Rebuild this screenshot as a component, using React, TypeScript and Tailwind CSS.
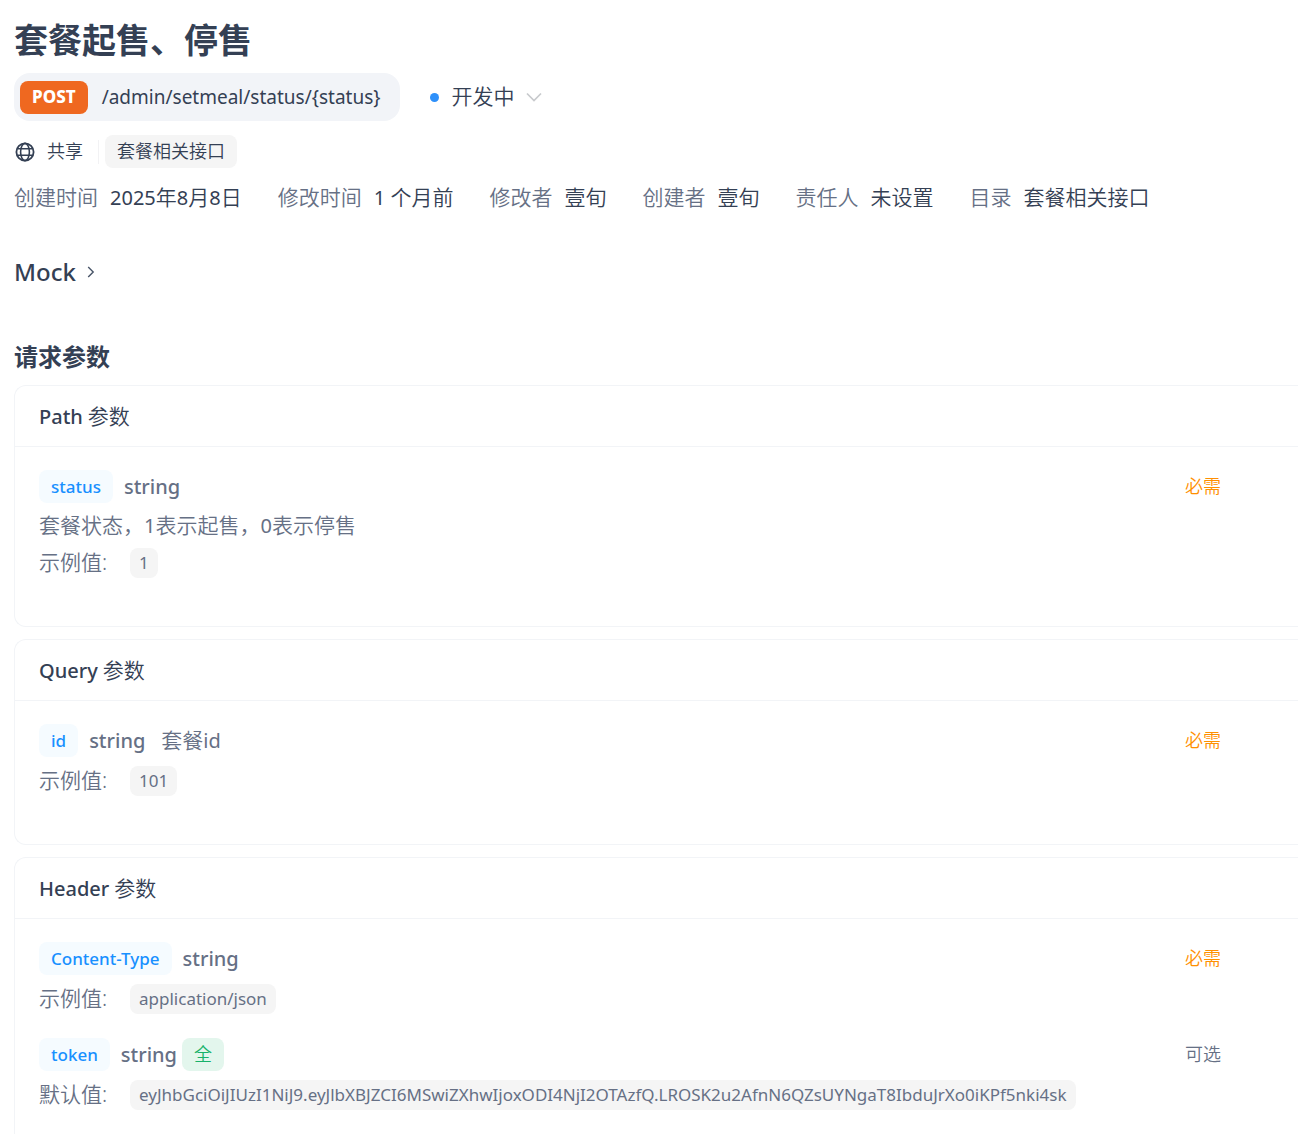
import React from "react";

type Field = {
  name: string;
  note?: string;
  description?: string;
  global?: boolean;
  required: boolean;
  valueLabel: string;
  value: string;
};

type Group = { title: string; fields: Field[] };

const meta = [
  ["创建时间", "2025年8月8日"],
  ["修改时间", "1 个月前"],
  ["修改者", "壹旬"],
  ["创建者", "壹旬"],
  ["责任人", "未设置"],
  ["目录", "套餐相关接口"],
];

const groups: Group[] = [
  {
    title: "Path",
    fields: [
      {
        name: "status",
        description: "套餐状态，1表示起售，0表示停售",
        required: true,
        valueLabel: "示例值:",
        value: "1",
      },
    ],
  },
  {
    title: "Query",
    fields: [
      { name: "id", note: "套餐id", required: true, valueLabel: "示例值:", value: "101" },
    ],
  },
  {
    title: "Header",
    fields: [
      {
        name: "Content-Type",
        required: true,
        valueLabel: "示例值:",
        value: "application/json",
      },
      {
        name: "token",
        global: true,
        required: false,
        valueLabel: "默认值:",
        value:
          "eyJhbGciOiJIUzI1NiJ9.eyJlbXBJZCI6MSwiZXhwIjoxODI4NjI2OTAzfQ.LROSK2u2AfnN6QZsUYNgaT8IbduJrXo0iKPf5nki4sk",
      },
    ],
  },
];

function GlobeIcon() {
  return (
    <svg width="20" height="20" viewBox="0 0 20 20" fill="none" stroke="currentColor" strokeWidth="1.8" aria-hidden="true">
      <circle cx="10" cy="10" r="8.6" />
      <ellipse cx="10" cy="10" rx="4.4" ry="8.6" strokeWidth="1.6" />
      <path d="M2.2 6.7h15.6M2.2 13.3h15.6" strokeWidth="1.6" />
    </svg>
  );
}

// Latin letters and digits are set one pixel smaller than the Chinese text beside them.
function Mixed({ text }: { text: string }) {
  return (
    <>
      {text.split(/([0-9A-Za-z]+)/).map((part, i) =>
        i % 2 ? (
          <span key={i} className="text-[20px] font-normal">
            {part}
          </span>
        ) : (
          part
        ),
      )}
    </>
  );
}

function FieldRow({ field }: { field: Field }) {
  return (
    <div className="flex flex-col gap-[9px]">
      <div className="flex h-[33px] items-center">
        <span className="flex h-[33px] items-center rounded-lg bg-[#f5fbff] px-3 text-[17px] font-medium text-[#1890ff]">
          {field.name}
        </span>
        <span className="ml-[11px] text-[20px] font-medium">string</span>
        {field.note && (
          <span className="ml-4 text-[21px]">
            <Mixed text={field.note} />
          </span>
        )}
        {field.global && (
          <span className="ml-[5px] flex h-[33px] items-center rounded-lg bg-[#e3f6ed] px-3 text-[18px] text-[#17b26a]">
            全
          </span>
        )}
        <span
          className={
            field.required
              ? "ml-auto text-[18px] text-[#ff8f00]"
              : "ml-auto text-[18px] text-[#667085]"
          }
        >
          {field.required ? "必需" : "可选"}
        </span>
      </div>
      {field.description && (
        <p className="text-[21px] leading-[27px]">
          <Mixed text={field.description} />
        </p>
      )}
      <div className="flex h-[30px] items-center">
        <span className="w-[91px] shrink-0 text-[21px]">{field.valueLabel}</span>
        <span className="flex h-[30px] items-center rounded-lg bg-[#f5f5f5] px-[9px] text-[17px] font-normal whitespace-nowrap">
          {field.value}
        </span>
      </div>
    </div>
  );
}

export default function App() {
  return (
    <main
      lang="zh-CN"
      className="flex min-h-screen flex-col bg-white pt-4 pl-3.5 font-['Noto_Sans','Noto_Sans_CJK_SC',sans-serif] font-[350] text-[#344054]"
    >
      <h1 className="text-[34px] leading-[48px] font-bold">套餐起售、停售</h1>

      <div className="mt-[9px] flex items-center">
        <div className="flex h-12 items-center gap-3.5 rounded-2xl bg-[#f2f4f8] pr-5 pl-1.5">
          <span className="flex h-[33px] items-center rounded-lg bg-[#ef6820] px-3 text-[17px] font-extrabold text-white">
            POST
          </span>
          <span className="text-[19px] font-normal">/admin/setmeal/status/&#123;status&#125;</span>
        </div>
        <button type="button" className="ml-[30px] flex items-center text-[21px]">
          <span className="size-[9px] rounded-full bg-[#2e90fa]" />
          <span className="ml-3">开发中</span>
          <svg className="ml-3" width="16" height="10" viewBox="0 0 16 10" fill="none" stroke="#c8cacd" strokeWidth="1.7" aria-hidden="true">
            <path d="M1 1.5 8 8.5 15 1.5" />
          </svg>
        </button>
      </div>

      <div className="mt-3.5 flex h-[33px] items-center text-[18px]">
        <button type="button" className="ml-px flex items-center gap-3">
          <GlobeIcon />
          共享
        </button>
        <span className="ml-[15px] h-6 w-px bg-[#f2f2f4]" />
        <span className="ml-1.5 flex h-[33px] items-center rounded-lg bg-[#f5f5f5] px-3">套餐相关接口</span>
      </div>

      <dl className="mt-[13px] flex flex-wrap gap-x-9 text-[21px] leading-8">
        {meta.map(([label, value]) => (
          <div key={label} className="flex gap-3">
            <dt className="text-[#667085]">{label}</dt>
            <dd>
              <Mixed text={value} />
            </dd>
          </div>
        ))}
      </dl>

      <button type="button" className="mt-[42px] flex items-center gap-[11px] self-start text-[24px] leading-8 font-medium">
        Mock
        <svg width="8" height="12" viewBox="0 0 8 12" fill="none" stroke="#475467" strokeWidth="1.4" aria-hidden="true">
          <path d="M1.2 1 6.2 6 1.2 11" />
        </svg>
      </button>

      <h2 className="mt-[53px] text-[24px] leading-8 font-bold">请求参数</h2>

      <div className="mt-3 flex flex-1 flex-col gap-3">
        {groups.map((group) => (
          <section
            key={group.title}
            className="rounded-l-xl border border-r-0 border-[#f2f4f7] last:flex-1 last:rounded-bl-none last:border-b-0"
          >
            <h3 className="flex h-[61px] items-center gap-[5px] border-b border-[#f2f4f7] px-6 pt-0.5">
              <span className="text-[20px] font-medium">{group.title}</span>
              <span className="text-[21px]">参数</span>
            </h3>
            <div
              className={
                group.fields.length > 1
                  ? "flex flex-col gap-6 pt-[23px] pr-[77px] pb-[23px] pl-6 text-[#667085]"
                  : "flex flex-col gap-6 pt-[23px] pr-[77px] pb-12 pl-6 text-[#667085]"
              }
            >
              {group.fields.map((field) => (
                <FieldRow key={field.name} field={field} />
              ))}
            </div>
          </section>
        ))}
      </div>
    </main>
  );
}
